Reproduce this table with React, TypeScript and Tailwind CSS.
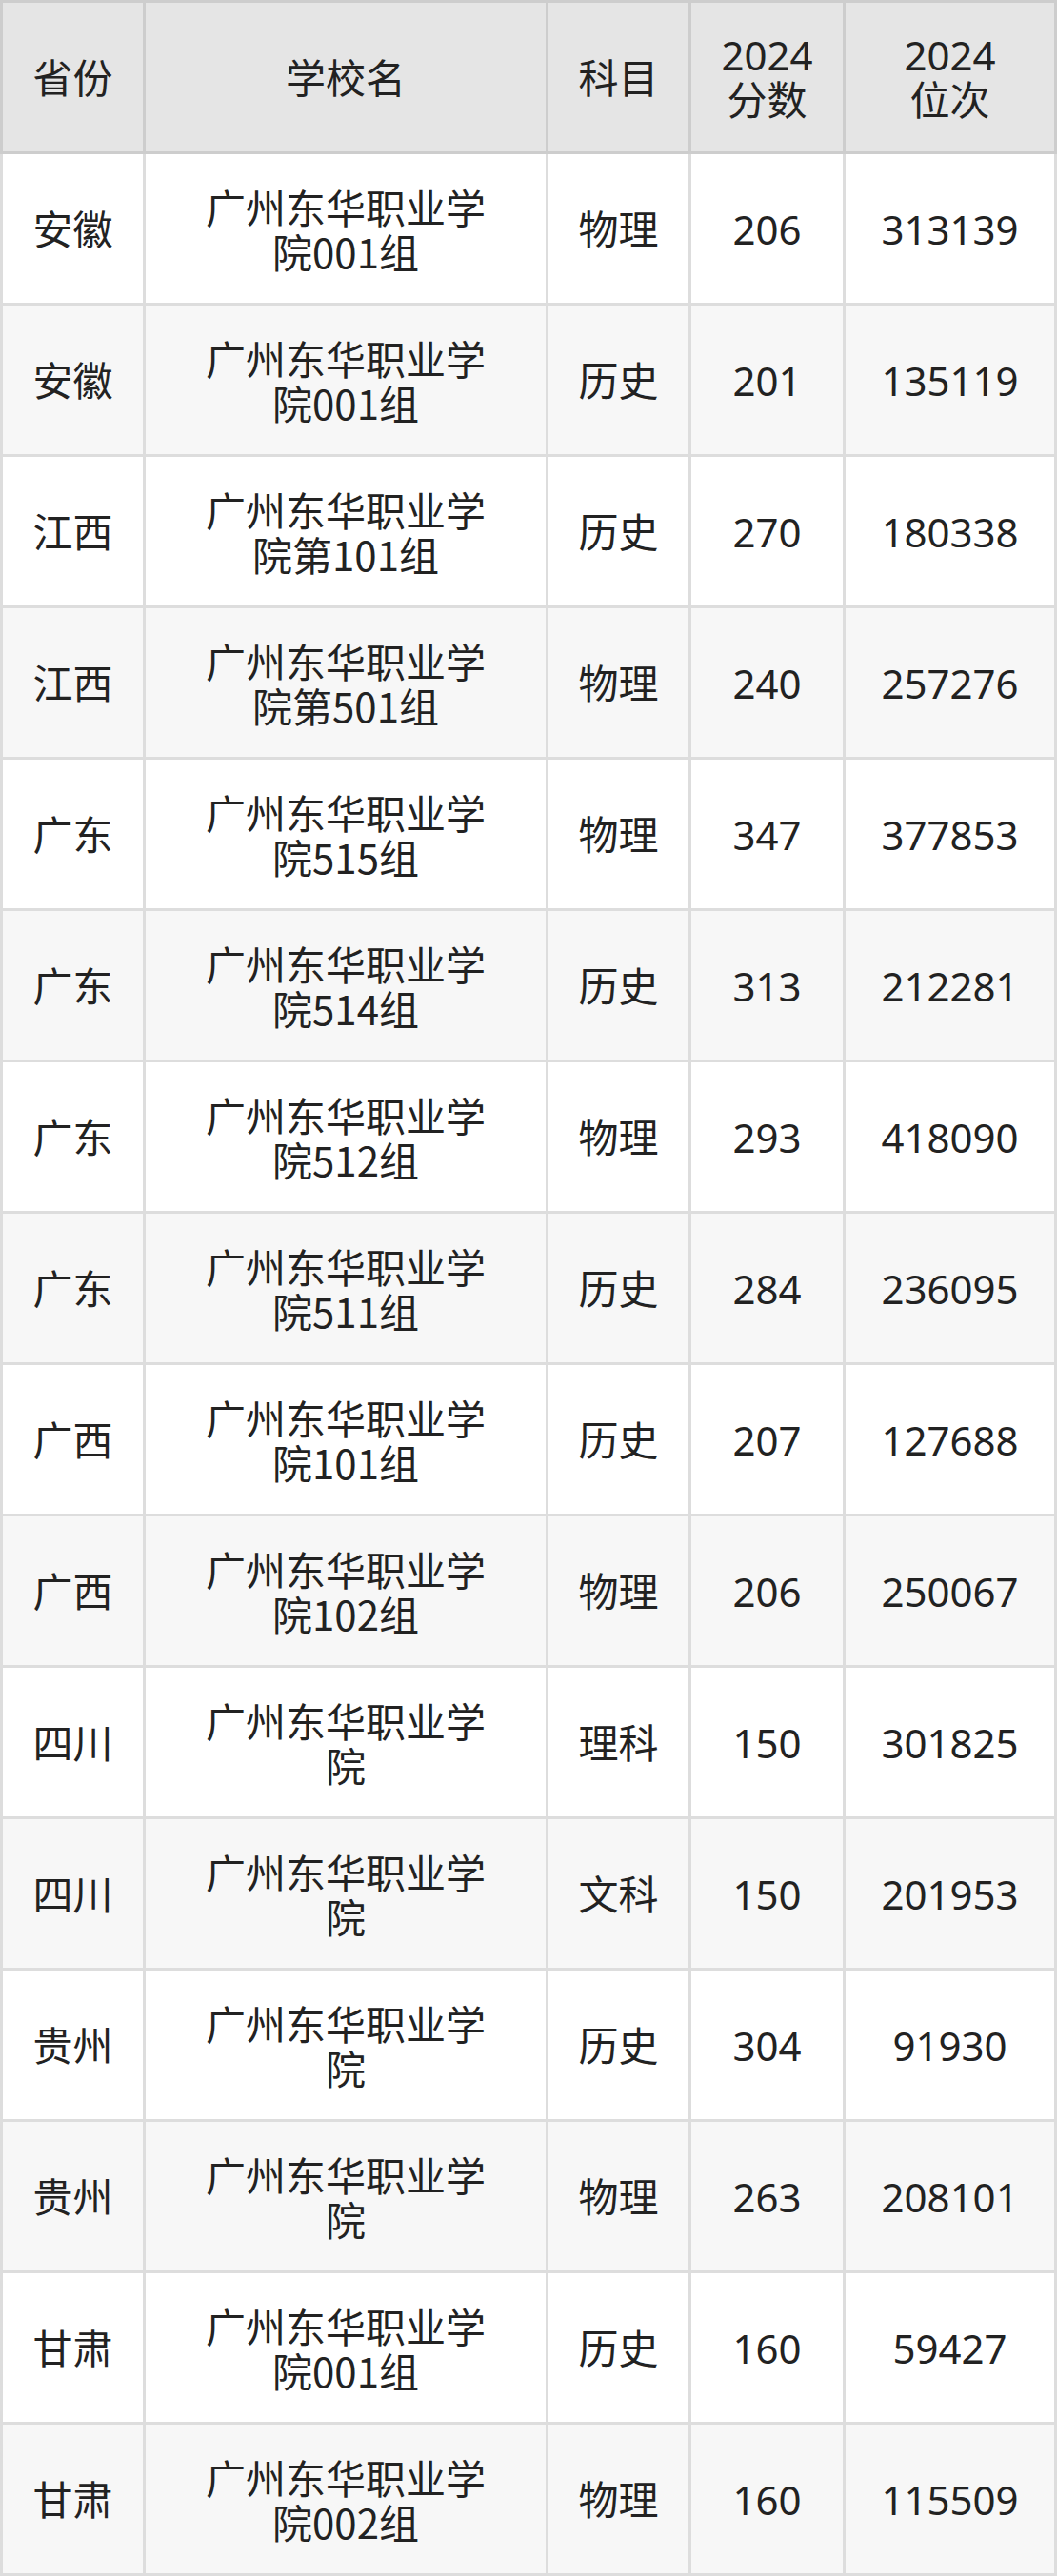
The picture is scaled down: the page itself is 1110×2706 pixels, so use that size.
const rows: [string, string, string, string, string][] = [
  ["安徽", "广州东华职业学院001组", "物理", "206", "313139"],
  ["安徽", "广州东华职业学院001组", "历史", "201", "135119"],
  ["江西", "广州东华职业学院第101组", "历史", "270", "180338"],
  ["江西", "广州东华职业学院第501组", "物理", "240", "257276"],
  ["广东", "广州东华职业学院515组", "物理", "347", "377853"],
  ["广东", "广州东华职业学院514组", "历史", "313", "212281"],
  ["广东", "广州东华职业学院512组", "物理", "293", "418090"],
  ["广东", "广州东华职业学院511组", "历史", "284", "236095"],
  ["广西", "广州东华职业学院101组", "历史", "207", "127688"],
  ["广西", "广州东华职业学院102组", "物理", "206", "250067"],
  ["四川", "广州东华职业学院", "理科", "150", "301825"],
  ["四川", "广州东华职业学院", "文科", "150", "201953"],
  ["贵州", "广州东华职业学院", "历史", "304", "91930"],
  ["贵州", "广州东华职业学院", "物理", "263", "208101"],
  ["甘肃", "广州东华职业学院001组", "历史", "160", "59427"],
  ["甘肃", "广州东华职业学院002组", "物理", "160", "115509"],
];

const cols = "grid grid-cols-[147px_420px_147px_159px_219px] gap-x-[3px] px-[3px]";
const cell = "flex h-[156px] items-center justify-center text-center";

export default function App() {
  return (
    <div
      className="w-[1110px] bg-white text-[42px] leading-[47px] text-[#222222]"
      style={{ fontFamily: '"Noto Sans", "Noto Sans CJK SC", sans-serif' }}
    >
      {/* header */}
      <div className={`${cols} bg-[#cdcdcd] py-[3px]`}>
        <div className={`${cell} bg-[#e5e5e5]`}>省份</div>
        <div className={`${cell} bg-[#e5e5e5]`}>学校名</div>
        <div className={`${cell} bg-[#e5e5e5]`}>科目</div>
        <div className={`${cell} flex-col bg-[#e5e5e5]`}>
          <span>2024</span>
          <span>分数</span>
        </div>
        <div className={`${cell} flex-col bg-[#e5e5e5]`}>
          <span>2024</span>
          <span>位次</span>
        </div>
      </div>

      {rows.map((r, i) => {
        const bg = i % 2 === 0 ? "bg-white" : "bg-[#f7f7f7]";
        return (
          <div key={i} className={`${cols} bg-[#dddddd] pb-[3px]`}>
            <div className={`${cell} ${bg}`}>{r[0]}</div>
            <div
              className={`${cell} ${bg} px-[50px]`}
              style={{ fontFamily: '"Noto Sans CJK SC", sans-serif' }}
            >
              {r[1]}
            </div>
            <div className={`${cell} ${bg}`}>{r[2]}</div>
            <div className={`${cell} ${bg}`}>{r[3]}</div>
            <div className={`${cell} ${bg}`}>{r[4]}</div>
          </div>
        );
      })}
    </div>
  );
}
